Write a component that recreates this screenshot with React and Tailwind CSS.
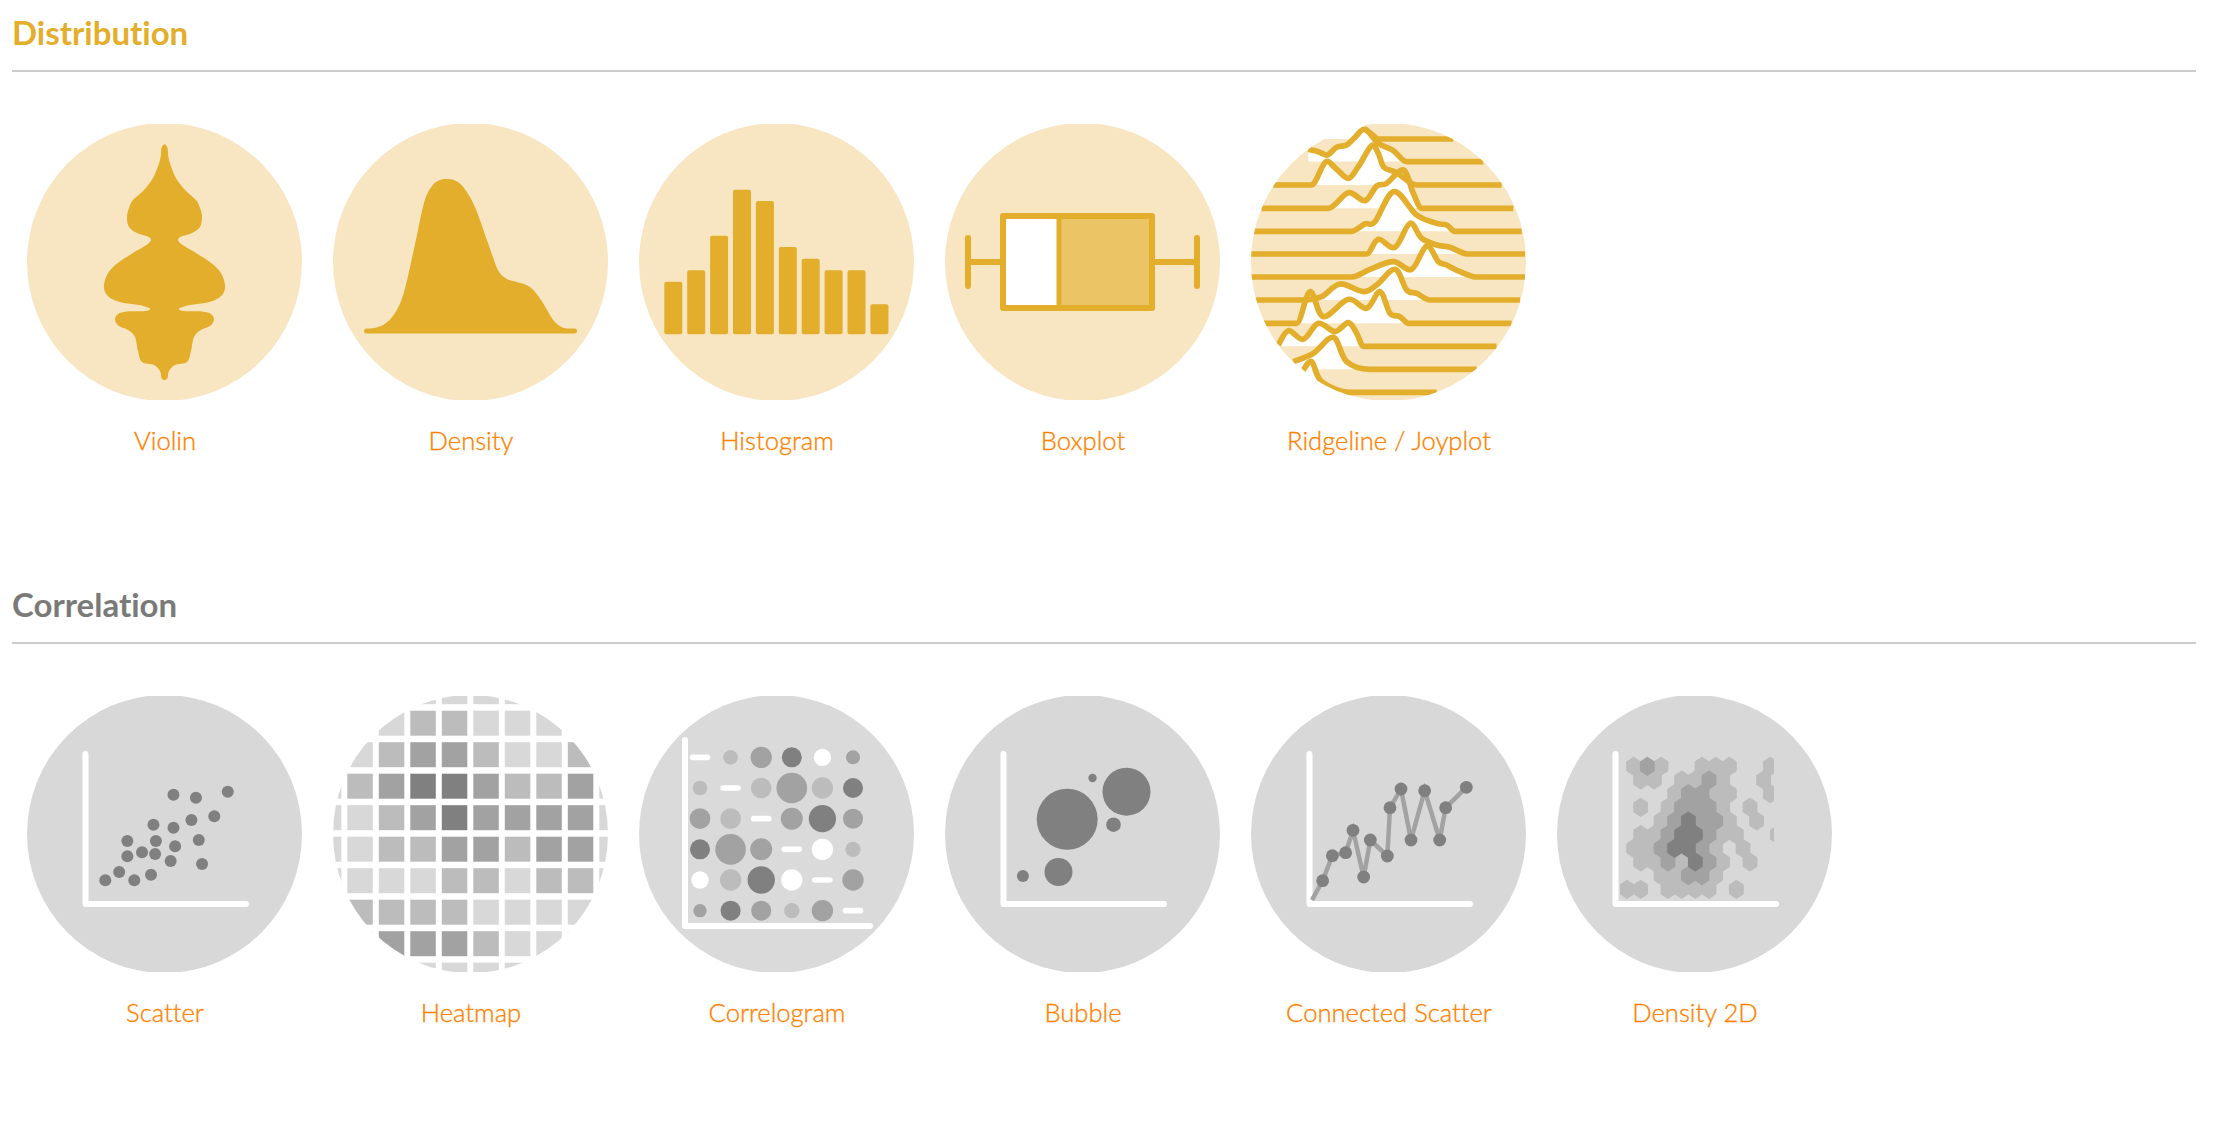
const AMBER = '#e2ae2b';
const AMBER_BG = '#f7e6c1';
const GRAY_BG = '#d8d8d8';
const LIGHT = '#bcbcbc';
const MID = '#a2a2a2';
const DARK = '#808080';

// catmull-rom through the points, flat runs stay straight
function smooth(pts) {
  let d = `M${pts[0][0]} ${pts[0][1]}`;
  const flat = (a, b) => a && b && a[1] === b[1];
  for (let i = 0; i < pts.length - 1; i++) {
    const p0 = pts[i - 1] || pts[i];
    const p1 = pts[i];
    const p2 = pts[i + 1];
    const p3 = pts[i + 2] || p2;
    if (flat(p1, p2)) {
      d += ` L${p2[0]} ${p2[1]}`;
      continue;
    }
    const third = (p2[0] - p1[0]) / 3;
    const c1x = flat(pts[i - 1], p1) ? p1[0] + third : p1[0] + (p2[0] - p0[0]) / 6;
    const c1y = flat(pts[i - 1], p1) ? p1[1] : p1[1] + (p2[1] - p0[1]) / 6;
    const c2x = flat(p2, pts[i + 2]) ? p2[0] - third : p2[0] - (p3[0] - p1[0]) / 6;
    const c2y = flat(p2, pts[i + 2]) ? p2[1] : p2[1] - (p3[1] - p1[1]) / 6;
    d += ` C${c1x} ${c1y} ${c2x} ${c2y} ${p2[0]} ${p2[1]}`;
  }
  return d;
}

function Icon({ children }) {
  return (
    <svg viewBox="0 0 276 276" className="block w-[276px] h-[276px] blur-[0.5px]">
      {children}
    </svg>
  );
}

function Disc({ fill }) {
  return <ellipse cx="137.5" cy="138" rx="137.5" ry="139" fill={fill} />;
}

function Axis() {
  return (
    <path d="M58.5 58 V208 H219" fill="none" stroke="#fff" strokeWidth="6" strokeLinecap="round" strokeLinejoin="round" />
  );
}

const VIOLIN_RIGHT = [
  [137.5, 20], [140.5, 24], [142, 36], [149, 54], [159, 67], [169, 76], [173, 84], [175, 93], [173, 103], [165, 109], [152.5, 113.5],
  [153, 119], [169, 129], [180, 136], [189, 143], [195, 151], [198, 161], [196.5, 169], [190, 175], [178, 179], [163, 181], [152, 184.5], [157, 187],
  [175, 187.5], [184, 190], [187, 196], [183, 202], [174, 206], [167, 213], [164, 227], [160, 238], [148, 241], [142, 247],
  [140.5, 254], [137.5, 256],
];

function Violin() {
  const left = VIOLIN_RIGHT.slice(1, -1).reverse().map(([x, y]) => [275 - x, y]);
  return (
    <Icon>
      <Disc fill={AMBER_BG} />
      <path d={smooth([...VIOLIN_RIGHT, ...left, VIOLIN_RIGHT[0]]) + ' Z'} fill={AMBER} />
    </Icon>
  );
}

function Density() {
  const curve = [
    [33, 206], [50, 201], [62, 189], [71, 168], [81, 125], [91, 79], [99, 62], [107, 56], [115, 55], [123, 57], [131, 64], [142, 83],
    [155, 119], [165, 146], [174, 155], [184, 158], [197, 163], [208, 176], [221, 197], [231, 204], [242, 206],
  ];
  return (
    <Icon>
      <Disc fill={AMBER_BG} />
      <path d={smooth(curve) + ' V209 H33 Z'} fill={AMBER} />
      <line x1="33.5" y1="207" x2="241.5" y2="207" stroke={AMBER} strokeWidth="5" strokeLinecap="round" />
    </Icon>
  );
}

function Histogram() {
  const tops = [157.7, 146.3, 111.7, 65.7, 77, 123, 134.7, 146.3, 146.3, 180.3];
  return (
    <Icon>
      <Disc fill={AMBER_BG} />
      {tops.map((top, i) => (
        <rect key={i} x={25.3 + i * 22.9} y={top} width="18" height={210.3 - top} rx="2" fill={AMBER} />
      ))}
    </Icon>
  );
}

function Boxplot() {
  return (
    <Icon>
      <Disc fill={AMBER_BG} />
      <rect x="58" y="92" width="56" height="92" fill="#fff" />
      <rect x="114" y="92" width="93" height="92" fill="#eac465" />
      <rect x="58" y="92" width="149" height="92" fill="none" stroke={AMBER} strokeWidth="6" strokeLinejoin="round" />
      <line x1="114" y1="92" x2="114" y2="184" stroke={AMBER} strokeWidth="5" />
      <line x1="23" y1="114" x2="23" y2="162" stroke={AMBER} strokeWidth="6" strokeLinecap="round" />
      <line x1="252" y1="114" x2="252" y2="162" stroke={AMBER} strokeWidth="6" strokeLinecap="round" />
      <line x1="23" y1="138" x2="58" y2="138" stroke={AMBER} strokeWidth="6" />
      <line x1="207" y1="138" x2="252" y2="138" stroke={AMBER} strokeWidth="6" />
    </Icon>
  );
}

// coordinates below are 3x, traced from the picture
const RIDGES = [
  { base: 87, pts: [[375, 58], [395, 72], [415, 87], [640, 87]] },
  { base: 155, pts: [[205, 118], [235, 125], [262, 135], [290, 112], [320, 105], [345, 82], [375, 58], [415, 100], [460, 122], [500, 155], [730, 155]] },
  { base: 225, pts: [[100, 225], [215, 225], [228, 210], [258, 155], [290, 178], [325, 205], [355, 170], [395, 107], [415, 130], [432, 172], [470, 188], [530, 225], [785, 225]] },
  { base: 295, pts: [[65, 295], [265, 295], [325, 248], [375, 272], [410, 228], [440, 220], [490, 180], [520, 250], [545, 295], [820, 295]] },
  { base: 364, pts: [[42, 364], [335, 364], [375, 342], [405, 335], [462, 245], [530, 315], [590, 340], [620, 345], [645, 364], [845, 364]] },
  { base: 432, pts: [[32, 432], [380, 432], [415, 388], [465, 412], [510, 340], [545, 385], [590, 405], [630, 412], [685, 432], [855, 432]] },
  { base: 501, pts: [[32, 501], [335, 501], [390, 478], [460, 455], [515, 478], [560, 408], [595, 455], [620, 465], [660, 485], [710, 501], [855, 501]] },
  { base: 570, pts: [[45, 570], [190, 570], [245, 560], [300, 522], [370, 545], [410, 525], [465, 478], [500, 540], [530, 550], [570, 570], [840, 570]] },
  { base: 640, pts: [[72, 640], [170, 640], [210, 545], [250, 620], [325, 568], [380, 595], [420, 545], [450, 610], [480, 620], [505, 640], [815, 640]] },
  { base: 709, pts: [[115, 705], [145, 662], [190, 688], [235, 640], [285, 665], [325, 638], [350, 670], [370, 709], [770, 709]] },
  { base: 778, pts: [[160, 755], [220, 730], [280, 682], [320, 755], [390, 778], [710, 778]] },
  { base: 847, pts: [[190, 780], [215, 755], [245, 815], [330, 847], [590, 847]] },
];

function Ridgeline() {
  return (
    <Icon>
      <defs>
        <clipPath id="ridge-clip">
          <ellipse cx="137.5" cy="138" rx="137.5" ry="139" />
        </clipPath>
      </defs>
      <g clipPath="url(#ridge-clip)">
        <g transform="translate(-11 -14) scale(0.3333)">
          <rect x="375" y="30" width="500" height="57" fill={AMBER_BG} />
          <path d="M245 87 L150 157 H900 V87 Z" fill={AMBER_BG} />
          {RIDGES.map((r, i) => {
            const next = RIDGES[i + 1] ? RIDGES[i + 1].base : 880;
            return (
              <g key={r.base}>
                <path d={`${smooth(r.pts)} V${r.base} H${r.pts[0][0]} Z`} fill="#fff" />
                {i > 0 && <rect x="0" y={r.base} width="900" height={next - r.base} fill={AMBER_BG} />}
              </g>
            );
          })}
          {RIDGES.map((r) => (
            <path key={r.base} d={smooth(r.pts)} fill="none" stroke={AMBER} strokeWidth="17" strokeLinejoin="round" />
          ))}
        </g>
      </g>
    </Icon>
  );
}

const SCATTER_DOTS = [
  [425, 674], [480, 683], [558, 665], [525, 739], [469, 750], [376, 764], [425, 773], [487, 810], [312, 813], [382, 813],
  [429, 829], [348, 847], [380, 852], [312, 859], [418, 873], [495, 882], [292, 906], [258, 931], [329, 931], [370, 914],
];

function Scatter() {
  return (
    <Icon>
      <Disc fill={GRAY_BG} />
      <Axis />
      {SCATTER_DOTS.map(([x, y], i) => (
        <circle key={i} cx={x / 2.45 - 27} cy={y / 3 - 126} r="6" fill={DARK} />
      ))}
    </Icon>
  );
}

const HEAT_TONES = { a: '#d8d8d8', b: '#bcbcbc', c: '#a2a2a2', d: '#808080' };
const HEAT_ROWS = [
  'aaaaaaaaaa',
  'aaabbaaaaa',
  'aabccbaabb',
  'abcddcbbca',
  'aabcdcccca',
  'aabbccbcca',
  'aaaabbabba',
  'abbbbaaaaa',
  'abcccbaaaa',
  'aaaaaaaaaa',
];

function Heatmap() {
  return (
    <Icon>
      <defs>
        <clipPath id="heat-clip">
          <ellipse cx="137.5" cy="138" rx="137.5" ry="139" />
        </clipPath>
      </defs>
      <g clipPath="url(#heat-clip)">
        {HEAT_ROWS.map((row, r) =>
          row.split('').map((tone, c) => (
            <rect
              key={`${r}-${c}`}
              x={14.3 + (c - 1) * 31.5}
              y={14.7 + (r - 1) * 31.5}
              width="25.5"
              height="25"
              fill={HEAT_TONES[tone]}
            />
          ))
        )}
      </g>
    </Icon>
  );
}

const CORR_FILL = { b: LIGHT, c: MID, d: DARK, w: '#fff' };
const CORR_CELLS = [
  [null, [22, 'b'], [32, 'c'], [30, 'd'], [26, 'w'], [21, 'c']],
  [[22, 'b'], null, [31, 'b'], [46, 'c'], [32, 'b'], [30, 'd']],
  [[31, 'c'], [31, 'b'], null, [33, 'c'], [41, 'd'], [30, 'c']],
  [[30, 'd'], [46, 'c'], [33, 'c'], null, [32, 'w'], [23, 'b']],
  [[26, 'w'], [32, 'b'], [41, 'd'], [32, 'w'], null, [32, 'c']],
  [[20, 'c'], [30, 'd'], [30, 'c'], [23, 'b'], [32, 'c'], null],
];

function Correlogram() {
  return (
    <Icon>
      <Disc fill="#dadada" />
      {CORR_CELLS.map((row, r) =>
        row.map((cell, c) => {
          const cx = (210 + c * 91.8) / 3 - 9;
          const cy = (202 + r * 92) / 3 - 6;
          if (!cell) return <rect key={`${r}-${c}`} x={cx - 10.3} y={cy - 2.8} width="20.6" height="5.6" rx="2.8" fill="#fff" />;
          return <circle key={`${r}-${c}`} cx={cx} cy={cy} r={cell[0] / 3} fill={CORR_FILL[cell[1]]} />;
        })
      )}
      <path d="M46 44 V230 H231" fill="none" stroke="#fff" strokeWidth="6" strokeLinecap="round" strokeLinejoin="round" />
    </Icon>
  );
}

function Bubble() {
  const bubbles = [[122.2, 123.3, 30.5], [181.5, 95.7, 24], [147.5, 82, 4.2], [168.5, 128.7, 7.3], [113.5, 176, 14], [77.9, 180, 6]];
  return (
    <Icon>
      <Disc fill={GRAY_BG} />
      <Axis />
      {bubbles.map(([cx, cy, r]) => (
        <circle key={cx} cx={cx} cy={cy} r={r} fill={DARK} />
      ))}
    </Icon>
  );
}

const CONNECTED = [
  [248, 572], [277, 497], [317, 488], [339, 421], [371, 561], [391, 450], [442, 498], [450, 353], [483, 297], [513, 450],
  [554, 302], [599, 450], [617, 353], [679, 292],
];

function ConnectedScatter() {
  const pts = CONNECTED.map(([x, y]) => [x / 3 - 11, y / 3 - 6]);
  return (
    <Icon>
      <Disc fill={GRAY_BG} />
      <Axis />
      <polyline points={[[61, 204], ...pts].map((p) => p.join(',')).join(' ')} fill="none" stroke={MID} strokeWidth="4.5" />
      {pts.map(([cx, cy]) => (
        <circle key={cx} cx={cx} cy={cy} r="6.4" fill={DARK} />
      ))}
    </Icon>
  );
}

// [center y, [center x, level], ...] at 3x
const HEX_ROWS = [
  [229, [[251, 1], [292, 2], [333, 1], [456, 1], [497, 1], [538, 1], [661, 1]]],
  [270, [[272, 1], [313, 1], [395, 1], [436, 1], [477, 2], [518, 1], [641, 1]]],
  [311, [[374, 1], [415, 2], [456, 2], [497, 1], [538, 1], [661, 1]]],
  [352, [[272, 1], [354, 1], [395, 2], [436, 2], [477, 2], [518, 1], [600, 1]]],
  [393, [[333, 1], [374, 2], [415, 3], [456, 2], [497, 2], [538, 1], [620, 1]]],
  [434, [[272, 1], [313, 1], [354, 2], [395, 3], [436, 3], [477, 2], [518, 1], [559, 1], [682, 1]]],
  [475, [[251, 1], [292, 1], [333, 2], [374, 3], [415, 3], [456, 2], [497, 1], [579, 1]]],
  [516, [[272, 1], [313, 1], [354, 2], [395, 1], [436, 3], [477, 2], [518, 1], [600, 1]]],
  [557, [[333, 1], [374, 1], [415, 2], [456, 2], [497, 1]]],
  [598, [[231, 1], [272, 1], [354, 1], [395, 1], [436, 1], [477, 1], [559, 1]]],
];
const HEX_FILL = { 1: LIGHT, 2: MID, 3: DARK };

function Density2D() {
  return (
    <Icon>
      <defs>
        <clipPath id="hex-clip">
          <rect x="63" y="50" width="154" height="153.5" />
        </clipPath>
      </defs>
      <Disc fill={GRAY_BG} />
      <g clipPath="url(#hex-clip)">
        {[1, 2, 3].map((tone) =>
          HEX_ROWS.map(([y, cells]) =>
            cells
              .filter(([, level]) => level === tone)
              .map(([x, level]) => {
                const cx = x / 3 - 7;
                const cy = y / 3 - 6;
                return (
                  <polygon
                    key={`${x}-${y}`}
                    points={`${cx},${cy - 9.1} ${cx + 6.9},${cy - 4.6} ${cx + 6.9},${cy + 4.6} ${cx},${cy + 9.1} ${cx - 6.9},${cy + 4.6} ${cx - 6.9},${cy - 4.6}`}
                    fill={HEX_FILL[level]}
                    stroke={HEX_FILL[level]}
                    strokeWidth="1"
                    strokeLinejoin="round"
                  />
                );
              })
          )
        )}
      </g>
      <Axis />
    </Icon>
  );
}

const SECTIONS = [
  {
    title: 'Distribution',
    color: 'text-[#e2ae2b]',
    items: [
      { label: 'Violin', Chart: Violin },
      { label: 'Density', Chart: Density },
      { label: 'Histogram', Chart: Histogram },
      { label: 'Boxplot', Chart: Boxplot },
      { label: 'Ridgeline / Joyplot', Chart: Ridgeline },
    ],
  },
  {
    title: 'Correlation',
    color: 'text-[#7a7a78]',
    items: [
      { label: 'Scatter', Chart: Scatter },
      { label: 'Heatmap', Chart: Heatmap },
      { label: 'Correlogram', Chart: Correlogram },
      { label: 'Bubble', Chart: Bubble },
      { label: 'Connected Scatter', Chart: ConnectedScatter },
      { label: 'Density 2D', Chart: Density2D },
    ],
  },
];

export default function App() {
  return (
    <div className="min-h-[1128px] bg-white pl-3 pr-6 font-['Lato',sans-serif] [font-variant-ligatures:none]">
      {SECTIONS.map(({ title, color, items }) => (
        <section key={title} className="h-[572px]">
          <h2 className={`pt-3 pb-[18px] text-[33px] leading-10 font-bold border-b-2 border-[#cccccc] ${color}`}>{title}</h2>
          <div className="mt-[52px] flex">
            {items.map(({ label, Chart }) => (
              <a key={label} className="flex w-[306px] flex-col items-center">
                <Chart />
                <span className="mt-6 text-[25.6px] leading-8 font-light text-[#ff8200] [-webkit-text-stroke:0.35px_#ff8200]">{label}</span>
              </a>
            ))}
          </div>
        </section>
      ))}
    </div>
  );
}
